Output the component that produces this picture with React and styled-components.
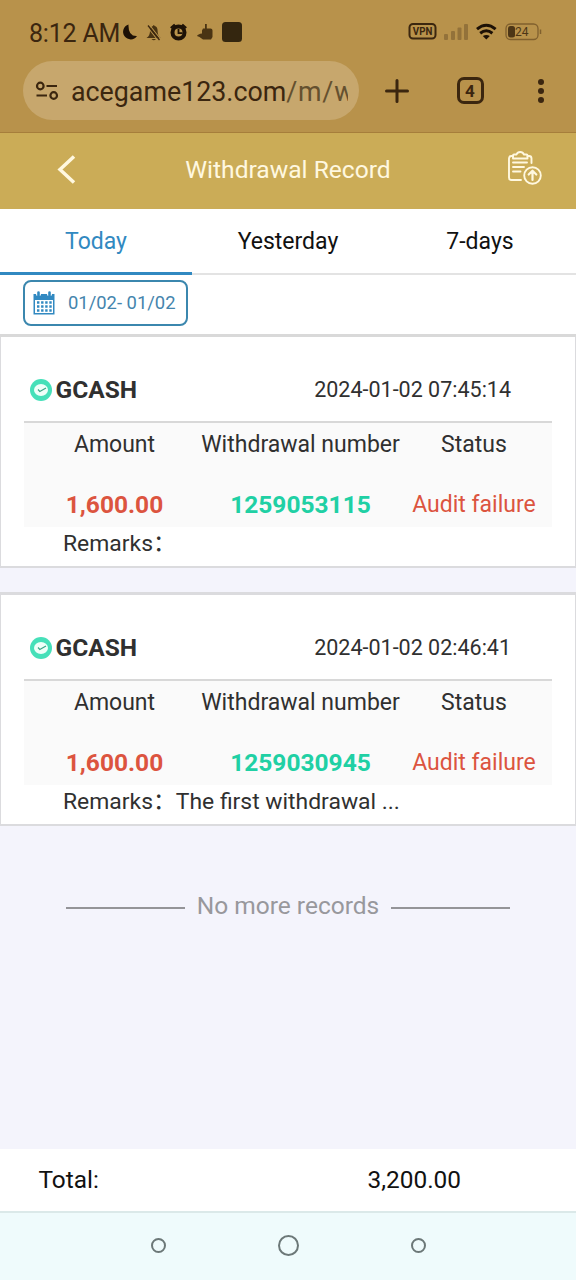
import styled, { createGlobalStyle } from 'styled-components';

const GlobalStyle = createGlobalStyle`
    * {
        box-sizing: border-box;
    }
    body {
        margin: 0;
        font-family: Roboto, "Noto Sans CJK SC", sans-serif;
        background: #f4f4fc;
    }
`;

const Page = styled.div`
    display: flex;
    flex-direction: column;
    width: 576px;
    height: 1280px;
    overflow: hidden;
    background: #f4f4fc;
    color: #303030;
`;

const BrowserBar = styled.div`
    height: 133px;
    background: #b8924b;
    border-bottom: 1px solid #a67e3b;
    color: #3b260f;
`;

const StatusBar = styled.div`
    display: flex;
    align-items: center;
    height: 61px;
    padding: 6px 34px 0 29px;
`;

const Clock = styled.span`
    width: 93px;
    font-size: 25px;
    line-height: 30px;
    letter-spacing: -0.2px;
    white-space: nowrap;
    padding-top: 1px;
`;

const StatusIcons = styled.svg`
    display: block;
    flex: none;
    margin-bottom: 3px;
    margin-left: ${props => props.$push ? 'auto' : '0'};
`;

const AddressRow = styled.div`
    display: flex;
    align-items: center;
    height: 59px;
    padding-left: 23px;
`;

const AddressPill = styled.div`
    display: flex;
    align-items: center;
    width: 336px;
    height: 59px;
    padding: 0 11px 0 12px;
    border-radius: 30px;
    background: #c7a76d;
`;

const Url = styled.div`
    flex: 1;
    overflow: hidden;
    margin-left: 12px;
    padding-top: 3px;
    font-size: 26.8px;
    line-height: 36px;
    white-space: nowrap;
    span {
        color: #64502f;
        letter-spacing: 0.8px;
    }
`;

const Actions = styled.div`
    display: flex;
    align-items: center;
    flex: 1;
    justify-content: space-between;
    padding: 0 31px 0 26px;
`;

const TabCount = styled.div`
    display: flex;
    align-items: center;
    justify-content: center;
    width: 27px;
    height: 27px;
    margin-left: 28px;
    margin-right: 34px;
    border: 3px solid #3b260f;
    border-radius: 7px;
    font-size: 17px;
    font-weight: 700;
`;

const TitleBar = styled.div`
    display: grid;
    grid-template-columns: 132px 1fr 132px;
    align-items: center;
    height: 76px;
    padding-bottom: 2px;
    background: #cbac57;
    color: #fff8e0;
    svg {
        display: block;
    }
`;

const Title = styled.h1`
    margin: 0;
    font-size: 24.6px;
    line-height: 32px;
    font-weight: 400;
    text-align: center;
`;

const Tabs = styled.div`
    display: grid;
    grid-template-columns: repeat(3, 1fr);
    height: 66px;
`;

const Tab = styled.button`
    border: 0;
    border-bottom: ${props => props.$active ? '3px solid #3189c1' : '2px solid #e3e3e3'};
    padding: ${props => props.$active ? '2px 0 0' : '1px 0 0'};
    background: #fff;
    color: ${props => props.$active ? '#3189c1' : '#111'};
    font-family: inherit;
    font-size: 23px;
`;

const Filter = styled.div`
    height: 62px;
    padding: 5px 23px 0;
    background: #fff;
    border-bottom: 3px solid #d9d9d9;
`;

const DateButton = styled.button`
    display: flex;
    align-items: center;
    gap: 13px;
    width: 165px;
    height: 46px;
    padding: 0 0 0 8px;
    border: 2px solid #3b87ae;
    border-radius: 8px;
    background: #fff;
    color: #4585ad;
    font-family: inherit;
    font-size: 18.4px;
    line-height: 22px;
    white-space: nowrap;
`;

const Card = styled.div`
    height: ${props => props.$first ? '231px' : '234px'};
    margin-bottom: ${props => props.$first ? '24px' : '0'};
    padding: 0 23px;
    border: solid #dbdbde;
    border-width: ${props => props.$first ? '0 1px 2px' : '3px 1px 2px'};
    background: #fff;
`;

const CardHead = styled.div`
    display: flex;
    align-items: center;
    height: 86px;
    padding: 22px 41px 0 6px;
    border-bottom: 2px solid #d8d8d8;
`;

const Method = styled.strong`
    flex: 1;
    margin-left: 3.5px;
    font-size: 24.5px;
    line-height: 30px;
`;

const Time = styled.span`
    font-size: 21.5px;
    line-height: 26px;
`;

const Details = styled.div`
    display: grid;
    grid-template-columns: 181px 191px 156px;
    grid-template-rows: 43px 61px;
    align-items: center;
    justify-items: center;
    height: 104px;
    background: #fafafa;
`;

const Label = styled.span`
    font-size: 23px;
    line-height: 28px;
    white-space: nowrap;
`;

const Value = styled.span`
    padding-top: 16px;
    font-size: ${props => props.$bold ? '24.5px' : '23px'};
    line-height: 28px;
    font-weight: ${props => props.$bold ? 700 : 400};
    color: ${props => props.$color};
    white-space: nowrap;
`;

const Remarks = styled.div`
    padding-left: 39px;
    font-size: 22.9px;
    line-height: 33px;
    white-space: nowrap;
`;

const EndNote = styled.div`
    display: flex;
    align-items: center;
    gap: 12px;
    margin-top: 63px;
    padding: 0 66px;
    color: #98989c;
    font-size: 24.5px;
    line-height: 34px;
    white-space: nowrap;
    &::before, &::after {
        content: '';
        flex: 1;
        height: 2px;
        margin-top: 3px;
        background: #949498;
    }
`;

const Total = styled.div`
    display: flex;
    align-items: center;
    justify-content: space-between;
    height: 62px;
    margin-top: auto;
    padding: 0 115px 2px 38.5px;
    background: #fff;
    color: #111;
    font-size: 24.4px;
`;

const NavBar = styled.div`
    display: flex;
    align-items: center;
    justify-content: center;
    gap: 112px;
    height: 69px;
    padding-bottom: 3px;
    background: #effbfc;
    border-top: 2px solid #dbe9e9;
`;

const NavDot = styled.div`
    width: ${props => props.$size}px;
    height: ${props => props.$size}px;
    border: 2px solid #6c7878;
    border-radius: 50%;
`;

const records = [
    { id: '1259053115', time: '2024-01-02 07:45:14', amount: '1,600.00', status: 'Audit failure', remarks: '' },
    { id: '1259030945', time: '2024-01-02 02:46:41', amount: '1,600.00', status: 'Audit failure', remarks: 'The first withdrawal ...' },
];

function LeftStatus() {
    return <StatusIcons width="122" height="22" viewBox="122 21 122 22">
        <path d="M128.5 24.5A7.6 7.6 0 1 0 137 36Q128 36.500 128.500 24.500Z" fill="#1d1106" />
        <path d="M146.500 38q3.500-2 3.500-7q.5-4.500 3-5q.8-2 1.600 0q3 .5 3 5q0 5 3 7ZM151.500 39h4.500q-2.200 2.500-4.500 0Z" fill="#4a3413" />
        <path d="M149.500 25l11 14M147.500 27l11 14" stroke="#b8924b" strokeWidth="1.2" />
        <path d="M148 25.500l11.500 14.500" stroke="#3b260f" strokeWidth="1.3" />
        <circle cx="178.500" cy="32.500" r="6" fill="#b8924b" stroke="#1d1106" strokeWidth="4" />
        <path d="M178.500 29v4.200h4" fill="none" stroke="#1d1106" strokeWidth="1.800" />
        <path d="M170.800 28l4-3.500M186.200 28l-4-3.500" stroke="#1d1106" strokeWidth="2.200" />
        <path d="M203 28.500h2v-4.500h1.800v4.500h3.700q2 0 2 2v6.500l-1.500 2.500h-8l-3.500-2.500l-2.500-1q1-2 5-2.500v-3Z" fill="#4a3413" />
        <rect x="222" y="22" width="20" height="20" rx="3.5" fill="#34260f" />
    </StatusIcons>;
}

function RightStatus() {
    return <StatusIcons $push width="134" height="20" viewBox="408 22 134 20">
        <rect x="409.5" y="24" width="26" height="14.5" rx="3.5" fill="none" stroke="#3b260f" strokeWidth="2" />
        <text x="412.800" y="35.2" textLength="19.5" lengthAdjust="spacingAndGlyphs" fontSize="11" fontWeight="700" fill="#3b260f">VPN</text>
        <g fill="#93723a">
            <rect x="444" y="34" width="4" height="6" rx="1" />
            <rect x="451" y="31" width="4" height="9" rx="1" />
            <rect x="457.5" y="27.5" width="4" height="12.5" rx="1" />
            <rect x="464" y="24" width="4" height="16" rx="1" />
        </g>
        <g fill="none" stroke="#1d1106" strokeWidth="3">
            <path d="M477 29.2q9.3-7.8 18.600 0" />
            <path d="M480.200 33.2q6.1-4.800 12.200 0" />
        </g>
        <path d="M482.800 36q3.500-2.200 7 0l-3.500 3.600Z" fill="#1d1106" />
        <rect x="506" y="24" width="32" height="15.5" rx="4.5" fill="none" stroke="#80602e" strokeWidth="1.300" />
        <rect x="508" y="26" width="7" height="11.5" rx="2.5" fill="#4d3616" />
        <path d="M540.500 29.500v4.500" stroke="#80602e" strokeWidth="1.5" />
        <text x="515" y="36.3" textLength="13.5" fontSize="12.5" lengthAdjust="spacingAndGlyphs" fill="#4d3616">24</text>
    </StatusIcons>;
}

function SiteIcon() {
    return <svg width="24" height="20" viewBox="0 0 24 20" fill="none" stroke="#3b260f" strokeWidth="2.2">
        <circle cx="5.3" cy="5" r="3.3" />
        <path d="M11.500 5H22M1.500 14.500H12" />
        <circle cx="18.7" cy="14.5" r="3.3" />
    </svg>;
}

function ClipboardIcon() {
    return <svg width="36" height="35" viewBox="0 0 36 35" fill="none" stroke="currentColor" strokeWidth="1.9" strokeLinecap="round" strokeLinejoin="round">
        <path d="M6 5H4.500Q2 5 2 7.500V26.500Q2 29 4.500 29H14M20.500 5H22Q24.500 5 24.500 7.500V12" />
        <path d="M6 7.500V4.500Q6 3.500 7 3.500H9.500Q10.500 1 13.200 1T17 3.500H19.500Q20.500 3.500 20.500 4.500V7.500Z" />
        <path d="M6 11.500H20M6 16H17M6 20.500H13.500" />
        <circle cx="25.5" cy="24.5" r="8.3" />
        <path d="M25.500 29V20M21.700 23.500L25.500 19.700L29.300 23.500" strokeWidth="2.2" />
    </svg>;
}

function CalendarIcon() {
    return <svg width="22" height="24" viewBox="0 0 22 24">
        <path d="M0.500 3H21.500V23.500H0.500Z" fill="#3189c1" />
        <path d="M2 9H20V22H2Z" fill="#fff" />
        <path d="M5.500 0V4.500M16.500 0V4.500" stroke="#fff" strokeWidth="4.8" />
        <path d="M5.500 1.500V4M16.500 1.500V4" stroke="#3189c1" strokeWidth="2.6" strokeLinecap="round" />
        <path d="M4 11.500H19M4 15.500H19M4 19.500H19" stroke="#3189c1" strokeWidth="2.3" strokeDasharray="2.4 1.7" />
    </svg>;
}

function MethodIcon() {
    return <svg width="22" height="22" viewBox="0 0 22 22">
        <circle cx="11" cy="11" r="11" fill="#46e0b9" />
        <ellipse cx="11" cy="11" rx="7" ry="6" fill="#effff9" />
        <path d="M8 10.500L9.800 12.500L16 9" fill="none" stroke="#3ca587" strokeWidth="1.2" />
    </svg>;
}

function RecordCard({ record, first }) {
    return <Card $first={first}>
        <CardHead>
            <MethodIcon />
            <Method>GCASH</Method>
            <Time>{record.time}</Time>
        </CardHead>
        <Details>
            <Label>Amount</Label>
            <Label>Withdrawal number</Label>
            <Label>Status</Label>
            <Value $bold $color="#dc543f">{record.amount}</Value>
            <Value $bold $color="#20d0a4">{record.id}</Value>
            <Value $color="#dc543f">{record.status}</Value>
        </Details>
        <Remarks>Remarks：{record.remarks}</Remarks>
    </Card>;
}

export default function App() {
    return <Page>
        <GlobalStyle />
        <BrowserBar>
            <StatusBar>
                <Clock>8:12 AM</Clock>
                <LeftStatus />
                <RightStatus />
            </StatusBar>
            <AddressRow>
                <AddressPill>
                    <SiteIcon />
                    <Url>acegame123.com<span>/m/w</span></Url>
                </AddressPill>
                <Actions>
                    <svg width="24" height="24" viewBox="0 0 24 24" stroke="#3b260f" strokeWidth="3" strokeLinecap="round">
                        <path d="M12 1.500V22.500M1.500 12H22.500" />
                    </svg>
                    <TabCount>4</TabCount>
                    <svg width="8" height="24" viewBox="0 0 8 24" fill="#3b260f">
                        <circle cx="4" cy="3" r="3" />
                        <circle cx="4" cy="12" r="3" />
                        <circle cx="4" cy="21" r="3" />
                    </svg>
                </Actions>
            </AddressRow>
        </BrowserBar>
        <TitleBar>
            <svg width="132" height="32" viewBox="0 0 132 32" fill="none" stroke="currentColor" strokeWidth="3.5">
                <path d="M74 2.500L60 15.500L74 28.500" />
            </svg>
            <Title>Withdrawal Record</Title>
            <svg width="132" height="40" viewBox="-63 -1 132 40">
                <ClipboardIcon />
            </svg>
        </TitleBar>
        <Tabs>
            <Tab $active>Today</Tab>
            <Tab>Yesterday</Tab>
            <Tab>7-days</Tab>
        </Tabs>
        <Filter>
            <DateButton><CalendarIcon />01/02- 01/02</DateButton>
        </Filter>
        {records.map((record, i) => <RecordCard key={record.id} record={record} first={i === 0} />)}
        <EndNote>No more records</EndNote>
        <Total>
            <span>Total:</span>
            <span>3,200.00</span>
        </Total>
        <NavBar>
            <NavDot $size={15} />
            <NavDot $size={21} />
            <NavDot $size={15} />
        </NavBar>
    </Page>;
}
